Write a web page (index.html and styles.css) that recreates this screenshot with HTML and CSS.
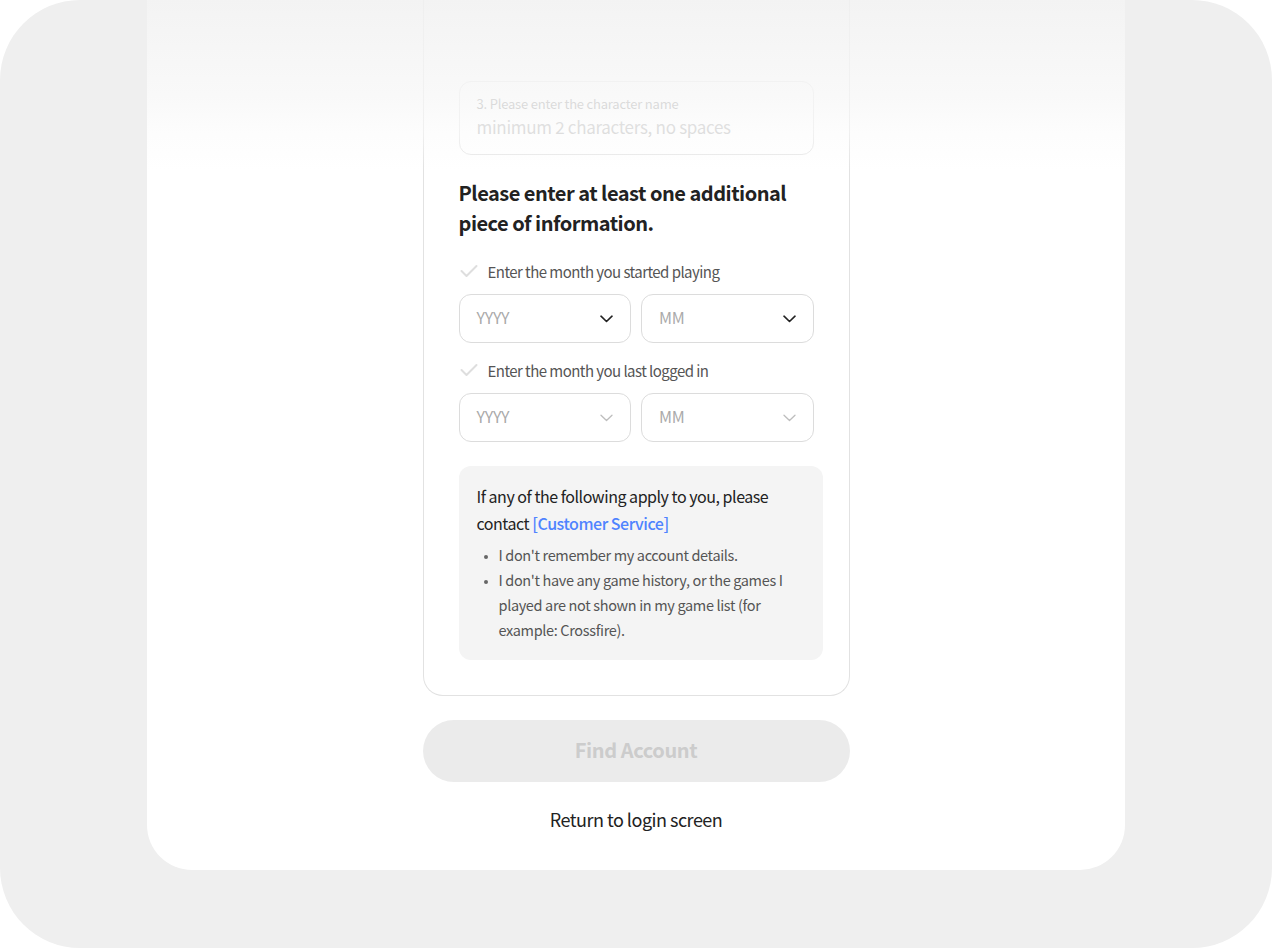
FILE: index.html
```html
<!DOCTYPE html>
<html lang="en">
<head>
<meta charset="utf-8">
<title>Find Account</title>
<link rel="stylesheet" href="styles.css">
</head>
<body>
<div class="frame">
  <div class="panel">
    <div class="card">
      <div class="field">
        <div class="field-label">3. Please enter the character name</div>
        <div class="field-placeholder">minimum 2 characters, no spaces</div>
      </div>

      <h2 class="heading">Please enter at least one additional piece of information.</h2>

      <div class="check-row">
        <svg class="check" width="18" height="14" viewBox="0 0 18 14"><path d="M1.5 7l5 5L16.5 2" fill="none" stroke="#dedede" stroke-width="2" stroke-linecap="round" stroke-linejoin="round"/></svg>
        <span>Enter the month you started playing</span>
      </div>
      <div class="select-row">
        <div class="select">
          <span>YYYY</span>
          <svg width="13" height="8" viewBox="0 0 13 8"><path d="M1 1.2l5.5 5.3 5.5-5.3" fill="none" stroke="#222" stroke-width="1.6" stroke-linecap="round" stroke-linejoin="round"/></svg>
        </div>
        <div class="select">
          <span>MM</span>
          <svg width="13" height="8" viewBox="0 0 13 8"><path d="M1 1.2l5.5 5.3 5.5-5.3" fill="none" stroke="#222" stroke-width="1.6" stroke-linecap="round" stroke-linejoin="round"/></svg>
        </div>
      </div>

      <div class="check-row second">
        <svg class="check" width="18" height="14" viewBox="0 0 18 14"><path d="M1.5 7l5 5L16.5 2" fill="none" stroke="#dedede" stroke-width="2" stroke-linecap="round" stroke-linejoin="round"/></svg>
        <span>Enter the month you last logged in</span>
      </div>
      <div class="select-row">
        <div class="select">
          <span>YYYY</span>
          <svg width="13" height="8" viewBox="0 0 13 8"><path d="M1 1.2l5.5 5.3 5.5-5.3" fill="none" stroke="#bdbdbd" stroke-width="1.3" stroke-linecap="round" stroke-linejoin="round"/></svg>
        </div>
        <div class="select">
          <span>MM</span>
          <svg width="13" height="8" viewBox="0 0 13 8"><path d="M1 1.2l5.5 5.3 5.5-5.3" fill="none" stroke="#bdbdbd" stroke-width="1.3" stroke-linecap="round" stroke-linejoin="round"/></svg>
        </div>
      </div>

      <div class="info">
        <p class="info-title">If any of the following apply to you, please contact <a class="link" href="#">[Customer Service]</a></p>
        <ul class="info-list">
          <li>I don't remember my account details.</li>
          <li>I don't have any game history, or the games I played are not shown in my game list (for example: Crossfire).</li>
        </ul>
      </div>
    </div>

    <button class="find-btn" type="button">Find Account</button>
    <a class="return" href="#">Return to login screen</a>

    <div class="fade"></div>
  </div>
</div>
</body>
</html>
```

FILE: styles.css
```css
* { box-sizing: border-box; }

html, body {
  margin: 0;
  padding: 0;
  background: #ffffff;
}

body {
  font-family: "Noto Sans CJK KR", "Noto Sans", sans-serif;
  color: #222;
}

.frame {
  width: 1272px;
  height: 948px;
  background: #efefef;
  border-radius: 80px;
  overflow: hidden;
  display: flex;
  justify-content: center;
}

.panel {
  position: relative;
  width: 978px;
  height: 870px;
  background: #ffffff;
  border-radius: 0 0 45px 45px;
  display: flex;
  flex-direction: column;
  align-items: center;
}

.card {
  width: 427px;
  border: 1px solid #e2e2e2;
  border-top: none;
  border-radius: 0 0 20px 20px;
  padding: 81px 26px 35px 35px;
}

.field {
  width: 355px;
  height: 74px;
  border: 1px solid #e6e6e6;
  border-radius: 12px;
  padding: 13px 17px 0;
}

.field-label {
  font-size: 13px;
  line-height: 18px;
  color: #999;
  letter-spacing: -0.2px;
}

.field-placeholder {
  font-size: 17px;
  line-height: 26px;
  margin-top: 1px;
  color: #bbb;
  letter-spacing: -0.3px;
}

.heading {
  margin: 23px 0 0;
  font-size: 20px;
  line-height: 30px;
  font-weight: 700;
  color: #222;
  letter-spacing: -0.5px;
  width: 340px;
}

.check-row {
  display: flex;
  align-items: center;
  gap: 10px;
  margin-top: 22px;
  height: 22px;
  font-size: 15px;
  color: #555;
  letter-spacing: -0.55px;
}

.check-row.second {
  margin-top: 16px;
}

.check {
  margin-left: 1px;
  flex: none;
}

.select-row {
  display: flex;
  gap: 10px;
  margin-top: 12px;
  width: 355px;
}

.select {
  flex: 1;
  height: 49px;
  border: 1px solid #dcdcdc;
  border-radius: 12px;
  display: flex;
  align-items: center;
  justify-content: space-between;
  padding: 0 17px 0 17px;
  font-size: 16px;
  color: #aaa;
  letter-spacing: -0.3px;
}

.select span {
  margin-top: -4px;
}

.info {
  margin-top: 24px;
  width: 364px;
  background: #f4f4f4;
  border-radius: 12px;
  padding: 17px 18px 18px;
}

.info-title {
  margin: 0;
  font-size: 16px;
  line-height: 27px;
  color: #222;
  letter-spacing: -0.47px;
}

.link {
  color: #4f83ff;
  text-decoration: none;
  font-weight: 500;
}

.info-list {
  margin: 5px 0 0;
  padding: 0 0 0 22px;
  font-size: 14.5px;
  line-height: 25px;
  color: #555;
  letter-spacing: -0.35px;
}

.info-list li::marker {
  font-size: 11px;
  color: #666;
}

.find-btn {
  margin-top: 24px;
  width: 427px;
  height: 62px;
  border: none;
  border-radius: 31px;
  background: #ebebeb;
  color: #cccccc;
  font-family: inherit;
  font-size: 20px;
  font-weight: 700;
  letter-spacing: -0.4px;
  padding: 0 0 4px;
}

.return {
  margin-top: 24px;
  font-size: 18px;
  line-height: 26px;
  color: #222;
  text-decoration: none;
  letter-spacing: -0.5px;
}

.fade {
  position: absolute;
  top: 0;
  left: 0;
  right: 0;
  height: 170px;
  pointer-events: none;
  background: linear-gradient(to bottom,
    rgba(241, 241, 241, 0.85) 0%,
    rgba(244, 244, 244, 0.8) 30%,
    rgba(247, 247, 247, 0.72) 58%,
    rgba(251, 251, 251, 0.55) 78%,
    rgba(255, 255, 255, 0) 100%);
}
```
